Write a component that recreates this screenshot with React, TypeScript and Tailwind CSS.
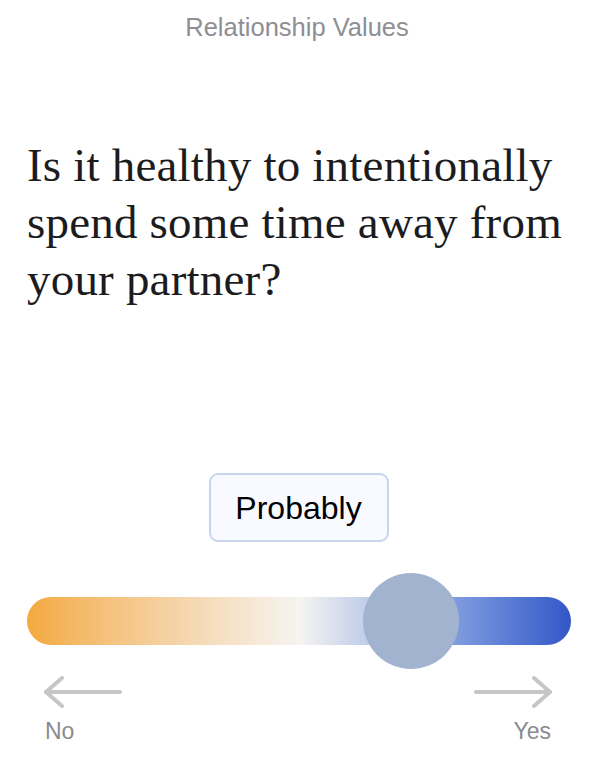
import React from 'react';

const ArrowLeft = () => (
  <svg width="78" height="32" viewBox="0 0 78 32" fill="none" stroke="#c6c6c6" strokeWidth="4" strokeLinecap="round" strokeLinejoin="round">
    <path d="M2 16 H76" />
    <path d="M18 2 L2 16 L18 30" />
  </svg>
);

const ArrowRight = () => (
  <svg width="78" height="32" viewBox="0 0 78 32" fill="none" stroke="#c6c6c6" strokeWidth="4" strokeLinecap="round" strokeLinejoin="round">
    <path d="M2 16 H76" />
    <path d="M60 2 L76 16 L60 30" />
  </svg>
);

export default function App() {
  const value = 0.706; // thumb position along track

  return (
    <div className="w-[594px] h-[772px] bg-white flex flex-col overflow-hidden" style={{ fontFamily: '"Liberation Sans", Arial, sans-serif' }}>
      {/* Category */}
      <div className="pt-[12px] text-center text-[25.5px] leading-[30px] text-[#8e8e93]">Relationship Values</div>

      {/* Question */}
      <h1 className="mt-[95px] px-[27px] text-[47px] leading-[57px] tracking-[0.2px] text-[#1c1c1e] font-normal" style={{ fontFamily: '"Liberation Serif", "Times New Roman", serif' }}>
        Is it healthy to intentionally spend some time away from your partner?
      </h1>

      {/* Current answer */}
      <div className="mt-[165px] flex justify-center">
        <div className="ml-[3px] w-[180px] h-[69px] flex items-center justify-center rounded-[9px] border-2 border-[#c8d5ef] bg-[#f8faff] text-[32px] text-black">
          Probably
        </div>
      </div>

      {/* Slider */}
      <div className="mt-[31px] pl-[27px] pr-[23px]">
        <div className="relative h-[96px] flex items-center">
          <div className="w-full h-[48px] rounded-full bg-linear-to-r from-[#f3aa3c] via-[#f5f4f1] to-[#3356c8]" />
          <div
            className="absolute top-0 w-[96px] h-[96px] rounded-full bg-[#a2b3cf] -translate-x-1/2"
            style={{ left: `${value * 100}%` }}
          />
        </div>
      </div>

      {/* Scale ends */}
      <div className="mt-[7px] pl-[44px] pr-[42px] flex justify-between">
        <ArrowLeft />
        <ArrowRight />
      </div>
      <div className="mt-[9px] pl-[45px] pr-[43px] flex justify-between text-[23px] leading-[28px] text-[#8a8a8e]">
        <span>No</span>
        <span>Yes</span>
      </div>
    </div>
  );
}
